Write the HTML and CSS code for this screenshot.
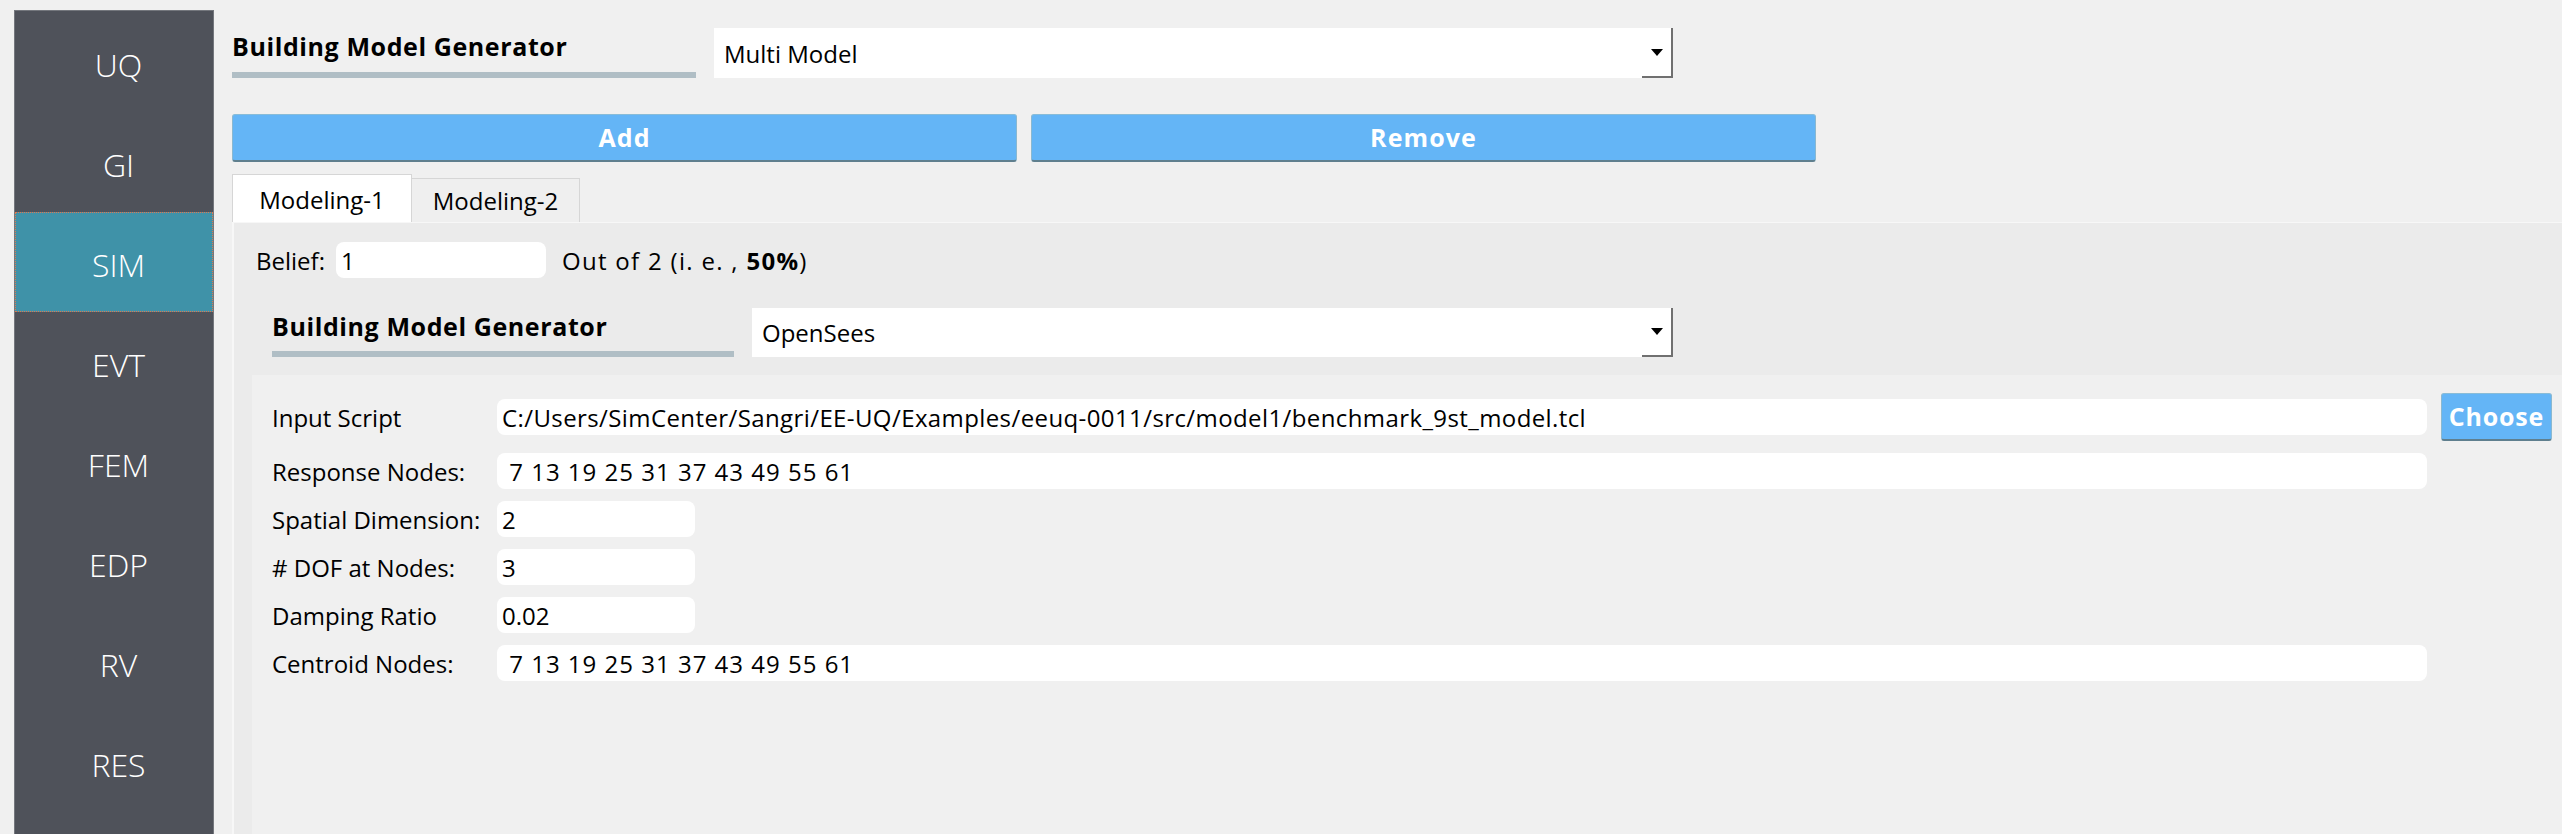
FILE: index.html
```html
<!DOCTYPE html>
<html lang="en">
<head>
<meta charset="utf-8">
<title>Building Model Generator</title>
<link rel="stylesheet" href="styles.css">
</head>
<body>
<div class="app">
  <nav class="sidebar">
    <div class="nav-item">UQ</div>
    <div class="nav-item">GI</div>
    <div class="nav-item active">SIM</div>
    <div class="nav-item">EVT</div>
    <div class="nav-item">FEM</div>
    <div class="nav-item">EDP</div>
    <div class="nav-item">RV</div>
    <div class="nav-item">RES</div>
  </nav>
  <main class="main">
    <div class="gen-row top-gen">
      <div class="hdr"><span class="hdr-label">Building Model Generator</span><span class="hdr-bar"></span></div>
      <div class="combo"><span class="combo-text">Multi Model</span><span class="combo-btn"><span class="arrow"></span></span></div>
    </div>
    <div class="btn-row">
      <button class="btn wide">Add</button>
      <button class="btn wide">Remove</button>
    </div>
    <div class="tabs">
      <div class="tab active">Modeling-1</div>
      <div class="tab">Modeling-2</div>
    </div>
    <div class="panel">
      <div class="belief-row">
        <span class="belief-label">Belief:</span>
        <span class="field belief-field">1</span>
        <span class="belief-text">Out of 2 (i. e. , <b>50%</b>)</span>
      </div>
      <div class="gen-row inner-gen">
        <div class="hdr"><span class="hdr-label">Building Model Generator</span><span class="hdr-bar"></span></div>
        <div class="combo"><span class="combo-text">OpenSees</span><span class="combo-btn"><span class="arrow"></span></span></div>
      </div>
      <div class="form-box">
        <div class="form-grid">
          <span class="label">Input Script</span>
          <span class="field long path">C:/Users/SimCenter/Sangri/EE-UQ/Examples/eeuq-0011/src/model1/benchmark_9st_model.tcl</span>
          <button class="btn choose">Choose</button>
          <span class="label">Response Nodes:</span>
          <span class="field long nums"> 7 13 19 25 31 37 43 49 55 61</span>
          <span class="label">Spatial Dimension:</span>
          <span class="field short">2</span>
          <span class="label"># DOF at Nodes:</span>
          <span class="field short">3</span>
          <span class="label">Damping Ratio</span>
          <span class="field short">0.02</span>
          <span class="label">Centroid Nodes:</span>
          <span class="field long nums"> 7 13 19 25 31 37 43 49 55 61</span>
        </div>
      </div>
    </div>
  </main>
</div>
</body>
</html>
```

FILE: styles.css
```css
* { box-sizing: border-box; }

html, body {
  margin: 0;
  padding: 0;
}

body {
  background: #f0f0f0;
  font-family: "Open Sans", "Liberation Sans", sans-serif;
  font-size: 24px;
  color: #000;
  overflow: hidden;
}

.app {
  display: flex;
  height: 834px;
}

/* ---------- sidebar ---------- */
.sidebar {
  flex: none;
  width: 200px;
  margin: 10px 0 0 14px;
  padding-top: 1px;
  background: #4f525a;
  border: 1px solid #74777d;
  border-bottom: none;
}

.nav-item {
  height: 100px;
  display: flex;
  align-items: center;
  justify-content: center;
  padding: 4px 0 0 9px;
  color: #ffffff;
  font-size: 32px;
  font-weight: 300;
}

.nav-item.active {
  background: #3f92a8;
  border: 1px dotted #e0774d;
}

/* ---------- main ---------- */
.main {
  flex: 1;
  min-width: 0;
  margin-left: 18px;
  padding-top: 28px;
  display: flex;
  flex-direction: column;
}

.gen-row {
  display: flex;
  align-items: flex-end;
  gap: 18px;
}

.hdr {
  width: 464px;
  height: 50px;
  display: flex;
  flex-direction: column;
  justify-content: space-between;
}

.hdr-label {
  font-size: 25px;
  font-weight: 700;
  letter-spacing: 0.6px;
  line-height: 30px;
  margin-top: 3px;
  white-space: nowrap;
}

.hdr-bar {
  height: 6px;
  background: #b0bec5;
}

.combo {
  height: 50px;
  width: 959px;
  background: #ffffff;
  display: flex;
  align-items: center;
}

.combo-text {
  flex: 1;
  padding-left: 10px;
}

.combo-btn {
  align-self: stretch;
  width: 31px;
  display: flex;
  align-items: center;
  justify-content: center;
  border-right: 2px solid #707070;
  border-bottom: 2px solid #707070;
}

.arrow {
  width: 0;
  height: 0;
  border-left: 6px solid transparent;
  border-right: 6px solid transparent;
  border-top: 7px solid #000;
}

/* ---------- buttons ---------- */
.btn-row {
  display: flex;
  gap: 14px;
  margin-top: 36px;
}

.btn {
  background: #64b5f6;
  color: #ffffff;
  font-family: "Open Sans", "Liberation Sans", sans-serif;
  font-size: 25px;
  font-weight: 700;
  letter-spacing: 1.1px;
  border: 1px solid #8ab8d0;
  border-top-color: #88bcd8;
  border-bottom: 2px solid #5f7f8e;
  border-radius: 3px;
  padding: 0;
  line-height: 1;
}

.btn.wide {
  width: 785px;
  height: 48px;
}

/* ---------- tabs ---------- */
.tabs {
  display: flex;
  align-items: flex-end;
  height: 48px;
  margin-top: 12px;
}

.tab {
  width: 168px;
  height: 44px;
  display: flex;
  align-items: center;
  justify-content: center;
  background: #efefef;
  border: 1px solid #d6d6d6;
  border-bottom: none;
  border-left: none;
}

.tab.active {
  width: 180px;
  height: 48px;
  background: #ffffff;
  border-left: 1px solid #d6d6d6;
  padding-top: 2px;
}

/* ---------- panel ---------- */
.panel {
  flex: 1;
  display: flex;
  flex-direction: column;
  background: #ebebeb;
  border-top: 1px solid #f7f7f7;
  border-left: 2px solid #f7f7f7;
  padding: 19px 0 0 18px;
}

.belief-row {
  display: flex;
  align-items: center;
  height: 36px;
  margin-left: 4px;
}

.belief-field {
  width: 210px;
  margin: 0 16px 0 11px;
}

.belief-text {
  letter-spacing: 1.3px;
}

.inner-gen {
  margin-top: 30px;
  margin-left: 20px;
}

.inner-gen .hdr {
  width: 462px;
  height: 49px;
}

.inner-gen .combo {
  width: 921px;
  height: 49px;
}

.field {
  height: 36px;
  display: flex;
  align-items: center;
  padding-left: 5px;
  background: #ffffff;
  border-radius: 8px;
  white-space: pre;
}

.field.path { letter-spacing: 0.4px; }
.field.nums { letter-spacing: 1px; }

.form-box {
  flex: 1;
  margin-top: 18px;
  padding: 18px 0 0 20px;
  background: #f0f0f0;
}

.form-grid {
  display: grid;
  grid-template-columns: 211px 1930px 111px;
  column-gap: 14px;
  row-gap: 12px;
  align-items: center;
}

.label {
  grid-column: 1;
  white-space: nowrap;
}

.field.long { grid-column: 2; }

.field.short {
  grid-column: 2;
  width: 198px;
}

.btn.choose {
  grid-column: 3;
  height: 48px;
  letter-spacing: 0.8px;
}
```
